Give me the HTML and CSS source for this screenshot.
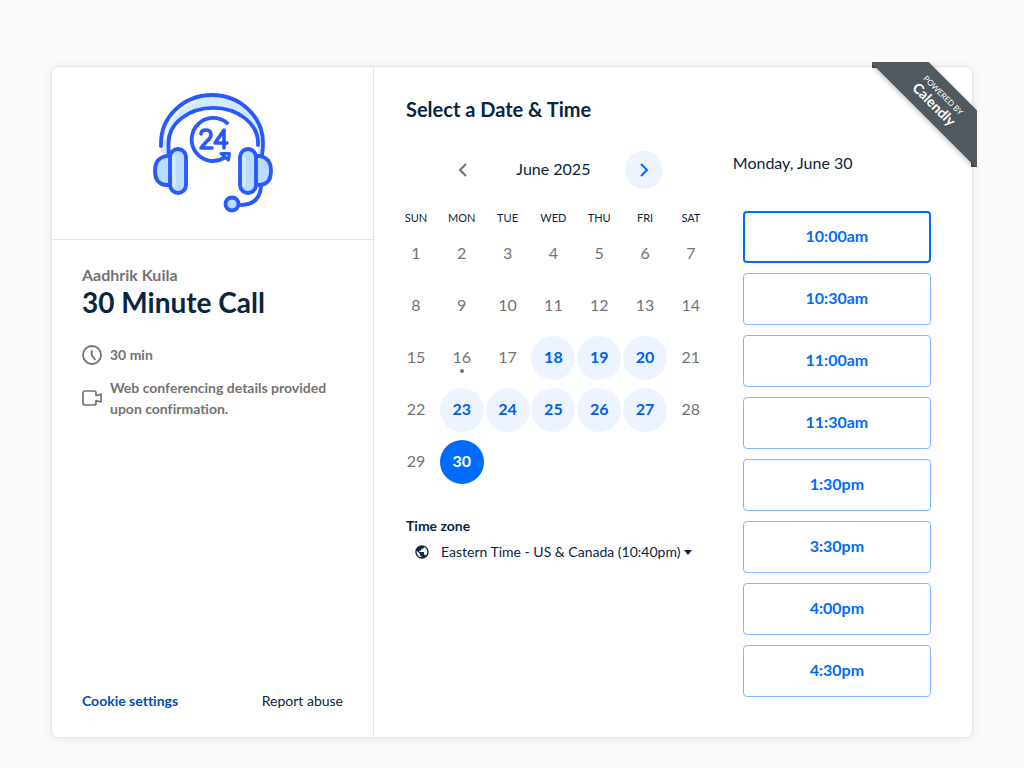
FILE: index.html
```html
<!DOCTYPE html>
<html lang="en">
<head>
<meta charset="utf-8">
<meta name="viewport" content="width=device-width, initial-scale=1">
<title>30 Minute Call - Aadhrik Kuila</title>
<link rel="stylesheet" href="styles.css">
</head>
<body>
<main class="card">
  <aside class="details">
    <div class="brand">
      <svg class="logo" viewBox="0 0 120 120" fill="none" stroke="#2859ff" stroke-width="3.800" stroke-linecap="round" stroke-linejoin="round" role="img" aria-label="24 hour support">
        <path fill="#d4e9ff" stroke="none" d="M8 53V50A51 48 0 0 1 110 50V60H105V50A44.500 35 0 0 0 15.500 50V60H8Z"/>
        <path stroke="#eef6ff" stroke-width="3" d="M12 46C15 28 25 14 42 8"/>
        <path d="M8 53V50A51 48 0 0 1 110 50Q110 56 109 62M15.500 60V50A44.500 35 0 0 1 105 50V52"/>
        <path fill="#b9dcff" d="M18 63H13Q2 65 2 78T13 92H18ZM102 63H107Q118 65 118 78T107 92H102Z"/>
        <rect x="17" y="56" width="16" height="44" rx="8" fill="#b9dcff"/>
        <rect x="87" y="56" width="16" height="44" rx="8" fill="#b9dcff"/>
        <path stroke="#d9edff" stroke-width="3" d="M21 64V92M91 64V92"/>
        <path d="M108 94Q106 112 88 112"/>
        <circle cx="79" cy="111" r="6.500" fill="#b9dcff"/>
        <path d="M74 30A21.500 21.500 0 1 0 71 65"/>
        <path d="M68 60.500H76.500L75.500 67Z" stroke-width="3"/>
        <path stroke-width="3.600" d="M48 41Q48 37 53 37T58 42Q58 45 54 48L48 55H59M71 55V37L62 50H74"/>
      </svg>
    </div>
    <div class="info">
      <p class="host">Aadhrik Kuila</p>
      <h1 class="event">30 Minute Call</h1>
      <ul class="facts">
        <li class="fact">
          <svg class="fact-icon" viewBox="0 0 20 20" fill="none" stroke="currentColor" stroke-width="1.800" stroke-linecap="round" stroke-linejoin="round" aria-hidden="true"><circle cx="10" cy="10" r="9"/><path d="M9.700 6V10.300L13 14.500"/></svg>
          <span>30 min</span>
        </li>
        <li class="fact">
          <svg class="fact-icon" viewBox="0 0 20 20" fill="none" stroke="currentColor" stroke-width="1.700" stroke-linejoin="round" stroke-linecap="round" aria-hidden="true"><path d="M14 7.500V5Q14 3 12 3H3Q1 3 1 5V15Q1 17 3 17H12Q14 17 14 15V12.500L16.500 13.200L19 14V6L16.500 7.200Z"/></svg>
          <span>Web conferencing details provided upon confirmation.</span>
        </li>
      </ul>
    </div>
    <footer class="links">
      <button type="button" class="cookie">Cookie settings</button>
      <a href="#report" class="report">Report abuse</a>
    </footer>
  </aside>

  <section class="booking">
    <div class="calendar">
      <h2 class="title">Select a Date &amp; Time</h2>
      <div class="month">
        <button type="button" class="step" aria-label="Previous month"><svg viewBox="0 0 14 14" fill="none" stroke="currentColor" stroke-width="2" aria-hidden="true"><path d="M10 1L4 7L10 13"/></svg></button>
        <span class="month-name">June 2025</span>
        <button type="button" class="step step-next" aria-label="Next month"><svg viewBox="0 0 14 14" fill="none" stroke="currentColor" stroke-width="2" aria-hidden="true"><path d="M4 1L10 7L4 13"/></svg></button>
      </div>
      <table class="days">
        <thead><tr><th>SUN</th><th>MON</th><th>TUE</th><th>WED</th><th>THU</th><th>FRI</th><th>SAT</th></tr></thead>
        <tbody>
          <tr><td>1</td><td>2</td><td>3</td><td>4</td><td>5</td><td>6</td><td>7</td></tr>
          <tr><td>8</td><td>9</td><td>10</td><td>11</td><td>12</td><td>13</td><td>14</td></tr>
          <tr><td>15</td><td><span class="today">16</span></td><td>17</td><td><button type="button" class="day">18</button></td><td><button type="button" class="day">19</button></td><td><button type="button" class="day">20</button></td><td>21</td></tr>
          <tr><td>22</td><td><button type="button" class="day">23</button></td><td><button type="button" class="day">24</button></td><td><button type="button" class="day">25</button></td><td><button type="button" class="day">26</button></td><td><button type="button" class="day">27</button></td><td>28</td></tr>
          <tr><td>29</td><td><button type="button" class="day day-selected" aria-pressed="true">30</button></td><td></td><td></td><td></td><td></td><td></td></tr>
        </tbody>
      </table>
      <div class="zone">
        <h3 class="zone-title" id="zone-title">Time zone</h3>
        <button type="button" class="zone-button" aria-haspopup="listbox" aria-describedby="zone-title">
          <svg class="globe" viewBox="1.500 1.500 21 21" fill="currentColor" aria-hidden="true"><path d="M12 2C6.480 2 2 6.480 2 12s4.480 10 10 10 10-4.480 10-10S17.520 2 12 2zm-1 17.930c-3.950-.490-7-3.850-7-7.930 0-.620.080-1.210.210-1.790L9 15v1c0 1.100.900 2 2 2v1.930zm6.900-2.540c-.260-.810-1-1.390-1.900-1.390h-1v-3c0-.550-.450-1-1-1H8v-2h2c.550 0 1-.450 1-1V7h2c1.100 0 2-.900 2-2v-.410c2.930 1.190 5 4.060 5 7.410 0 2.080-.800 3.970-2.100 5.390z"/></svg>
          <span>Eastern Time - US &amp; Canada (10:40pm)</span>
          <svg class="caret" viewBox="0 0 8 5" fill="currentColor" aria-hidden="true"><path d="M0 0H8L4 5Z"/></svg>
        </button>
      </div>
    </div>
    <div class="times">
      <p class="date">Monday, June 30</p>
      <div class="slots">
        <button type="button" class="slot slot-active">10:00am</button>
        <button type="button" class="slot">10:30am</button>
        <button type="button" class="slot">11:00am</button>
        <button type="button" class="slot">11:30am</button>
        <button type="button" class="slot">1:30pm</button>
        <button type="button" class="slot">3:30pm</button>
        <button type="button" class="slot">4:00pm</button>
        <button type="button" class="slot">4:30pm</button>
      </div>
    </div>
  </section>

  <a href="#calendly" class="ribbon">
    <span class="band"><span class="powered">POWERED BY</span><span class="maker">Calendly</span></span>
  </a>
</main>
</body>
</html>
```

FILE: styles.css
```css
* { box-sizing: border-box; }

body {
  margin: 0;
  min-height: 100vh;
  padding: 66px 51px 29px;
  background: #fafafa;
  color: #0b2540;
  font: 16px/24px Lato, "Open Sans", sans-serif;
  font-variant-ligatures: none;
}

h1, h2, h3, p, ul { margin: 0; padding: 0; }

button {
  padding: 0;
  border: 0;
  background: none;
  color: inherit;
  font: inherit;
  cursor: pointer;
}

a { color: inherit; text-decoration: none; }

.card {
  position: relative;
  display: grid;
  grid-template-columns: 35fr 65fr;
  max-width: 1060px;
  margin: 0 auto;
  border: 1px solid #e6e6e6;
  border-radius: 8px;
  background: #fff;
  box-shadow: 0 1px 8px rgba(0, 0, 0, 0.08);
}

.details {
  display: flex;
  flex-direction: column;
  border-right: 1px solid #e4e4e4;
}

.brand {
  display: flex;
  justify-content: center;
  padding: 26px;
  border-bottom: 1px solid #e4e4e4;
}

.logo { width: 120px; height: 120px; }

.info {
  flex: 1;
  padding: 24px 30px;
  color: #737373;
  font-weight: 700;
}

.host { line-height: 22px; }

.event {
  color: #0b2540;
  font-size: 28px;
  line-height: 32px;
}

.facts {
  display: grid;
  gap: 12px;
  margin-top: 26px;
  list-style: none;
  font-size: 14px;
  line-height: 21px;
}

.fact { display: flex; align-items: center; gap: 8px; }
.fact-icon { flex: none; width: 20px; height: 20px; }

.links {
  display: flex;
  justify-content: space-between;
  padding: 0 30px 26px;
  font-size: 14px;
  line-height: 20px;
}

.cookie { color: #004eba; font-weight: 700; }

.booking {
  display: grid;
  grid-template-columns: 3fr 2fr;
}

.title {
  padding: 30px 32px 0;
  font-size: 20px;
  line-height: 24px;
}

.month {
  display: flex;
  align-items: center;
  justify-content: space-between;
  width: 61%;
  margin: 30px auto 19px;
}

.month-name { padding-bottom: 2px; }

.step {
  display: grid;
  place-items: center;
  width: 38px;
  height: 38px;
  border-radius: 50%;
  color: #737373;
}

.step svg { width: 14px; height: 14px; }
.step-next { background: #edf4ff; color: #006bff; }

.days {
  width: 100%;
  padding: 0 19px;
  border-spacing: 0;
  table-layout: fixed;
  color: #737373;
  text-align: center;
}

.days th {
  height: 20px;
  padding: 0;
  color: #0b2540;
  font-size: 11px;
  font-weight: 400;
  line-height: 20px;
}

.days td { height: 52px; padding: 0 0 2px; }
.days td:has(.day) { padding: 0; }

.day {
  display: block;
  width: 44px;
  height: 44px;
  margin: 0 auto;
  padding-bottom: 2px;
  border-radius: 50%;
  background: #edf4ff;
  color: #0060e6;
  font-weight: 700;
}

.day-selected { background: #006bff; color: #fff; }

.today { position: relative; }

.today::after {
  content: "";
  position: absolute;
  bottom: -7px;
  left: 50%;
  width: 4px;
  height: 4px;
  margin-left: -2px;
  border-radius: 50%;
  background: #737373;
}

.zone { padding: 28px 32px 0; font-size: 14px; line-height: 20px; }
.zone-title { font-size: 14px; }

.zone-button {
  display: flex;
  align-items: center;
  margin-top: 6px;
  padding-left: 9px;
  white-space: nowrap;
}

.globe { width: 14px; height: 14px; margin-right: 12px; }
.caret { width: 8px; height: 5px; margin-left: 4px; }

.times { padding: 84px 41px 40px 0; }

.slots {
  display: grid;
  gap: 10px;
  margin-top: 36px;
  padding-left: 10px;
}

.slot {
  height: 52px;
  padding-bottom: 2px;
  border: 1px solid #80b5ff;
  border-radius: 4px;
  color: #006bff;
  font-weight: 700;
}

.slot-active { border: 2px solid #006bff; }

/* Corner ribbon folded over the card's edge */
.ribbon {
  position: absolute;
  top: -5px;
  right: -5px;
  width: 105px;
  height: 105px;
  overflow: hidden;
  color: #fff;
  background:
    linear-gradient(#4b545b, #4b545b) left top / 6px 6px no-repeat,
    linear-gradient(#4b545b, #4b545b) right bottom / 6px 6px no-repeat;
}

.band {
  position: absolute;
  top: 18px;
  left: -19px;
  display: flex;
  flex-direction: column;
  align-items: center;
  justify-content: center;
  width: 170px;
  height: 41px;
  background: #505960;
  box-shadow: 0 1px 5px rgba(0, 0, 0, 0.3);
  transform: rotate(45deg);
}

.powered { font-size: 8px; line-height: 10px; }
.maker { font-size: 14px; font-weight: 700; line-height: 16px; }
```
